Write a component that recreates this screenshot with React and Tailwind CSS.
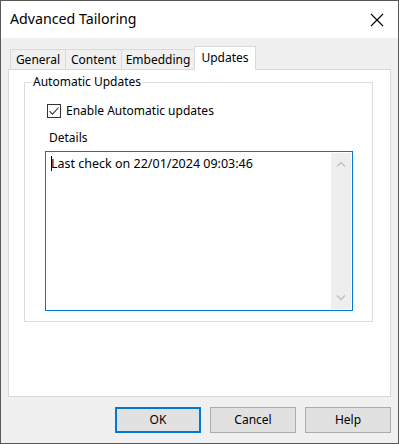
import React from "react";

const font = { fontFamily: '"Noto Sans", "Segoe UI", sans-serif' };

function Tab({ label, w }) {
  return (
    <div
      className="h-[20px] border border-[#d9d9d9] border-b-0 -ml-px first:ml-0 bg-[#f0f0f0] flex items-center justify-center text-[12px] text-black"
      style={{ width: w }}
    >
      {label}
    </div>
  );
}

function Button({ label, def }) {
  return (
    <div
      className={`w-[86px] h-[26px] flex items-center justify-center text-[12px] text-black bg-[#e1e1e1] ${
        def ? "border-2 border-[#0078d7]" : "border border-[#adadad]"
      }`}
    >
      {label}
    </div>
  );
}

export default function App() {
  return (
    <div
      className="w-[399px] h-[444px] bg-[#f0f0f0] border border-[#595959] flex flex-col text-black"
      style={font}
    >
      {/* title bar */}
      <div className="h-[37px] bg-white flex items-center justify-between pl-[9px] pr-[14px] shrink-0">
        <span className="text-[14.2px] leading-none">Advanced Tailoring</span>
        <svg width="14" height="14" viewBox="0 0 14 14">
          <path d="M1 1 L13 13 M13 1 L1 13" stroke="#000" strokeWidth="1.1" />
        </svg>
      </div>

      {/* tabs */}
      <div className="mt-[8px] px-[7px] flex flex-col">
        <div className="flex items-end h-[23px] pl-[2px] relative z-10">
          <Tab label="General" w={56} />
          <Tab label="Content" w={57} />
          <Tab label="Embedding" w={74} />
          <div className="w-[62px] h-[24px] -ml-px -mb-px bg-white border border-[#d9d9d9] border-b-0 flex items-start justify-center pt-[2px] text-[12px]">
            Updates
          </div>
        </div>
        <div className="h-[328px] bg-white border border-[#d9d9d9] pt-[12px] pl-[15px] pr-[17px]">
          {/* group box */}
          <div className="relative h-[240px] border border-[#dcdcdc] pt-[21px] pl-[22px]">
            <span className="absolute -top-[9px] left-[6px] bg-white px-[2px] text-[12px] leading-[16px]">
              Automatic Updates
            </span>
            <div className="flex items-center gap-[5px] h-[14px]">
              <div className="w-[14px] h-[14px] border border-[#333] bg-white flex items-center justify-center">
                <svg width="12" height="12" viewBox="0 0 12 12">
                  <path d="M1.5 6.2 L4.5 9.2 L10.5 2.5" fill="none" stroke="#333" strokeWidth="1.1" />
                </svg>
              </div>
              <span className="text-[12px] leading-none">Enable Automatic updates</span>
            </div>
            <div className="mt-[13px] ml-[2px] text-[12px] leading-[14px]">Details</div>
            <div className="mt-[6px] -ml-[2px] w-[308px] h-[160px] border border-[#0078d7] bg-white flex">
              <div className="flex-1 pl-[5px] pt-[4px] text-[12.5px] leading-[15px] flex items-start">
                <span className="inline-block w-px h-[15px] bg-black mr-[-1px]" />
                <span>Last check on 22/01/2024 09:03:46</span>
              </div>
              <div className="w-[20px] m-px bg-[#eeeeee] flex flex-col items-center justify-between py-[8px]">
                <svg width="10" height="6" viewBox="0 0 10 6">
                  <path d="M1 5.5 L5 1.5 L9 5.5" fill="none" stroke="#c2c2c2" strokeWidth="1.5" />
                </svg>
                <svg width="10" height="6" viewBox="0 0 10 6">
                  <path d="M1 0.5 L5 4.5 L9 0.5" fill="none" stroke="#c2c2c2" strokeWidth="1.5" />
                </svg>
              </div>
            </div>
          </div>
        </div>
      </div>

      {/* buttons */}
      <div className="mt-[10px] flex justify-end gap-[9px] pr-[7px]">
        <Button label="OK" def />
        <Button label="Cancel" />
        <Button label="Help" />
      </div>
    </div>
  );
}
